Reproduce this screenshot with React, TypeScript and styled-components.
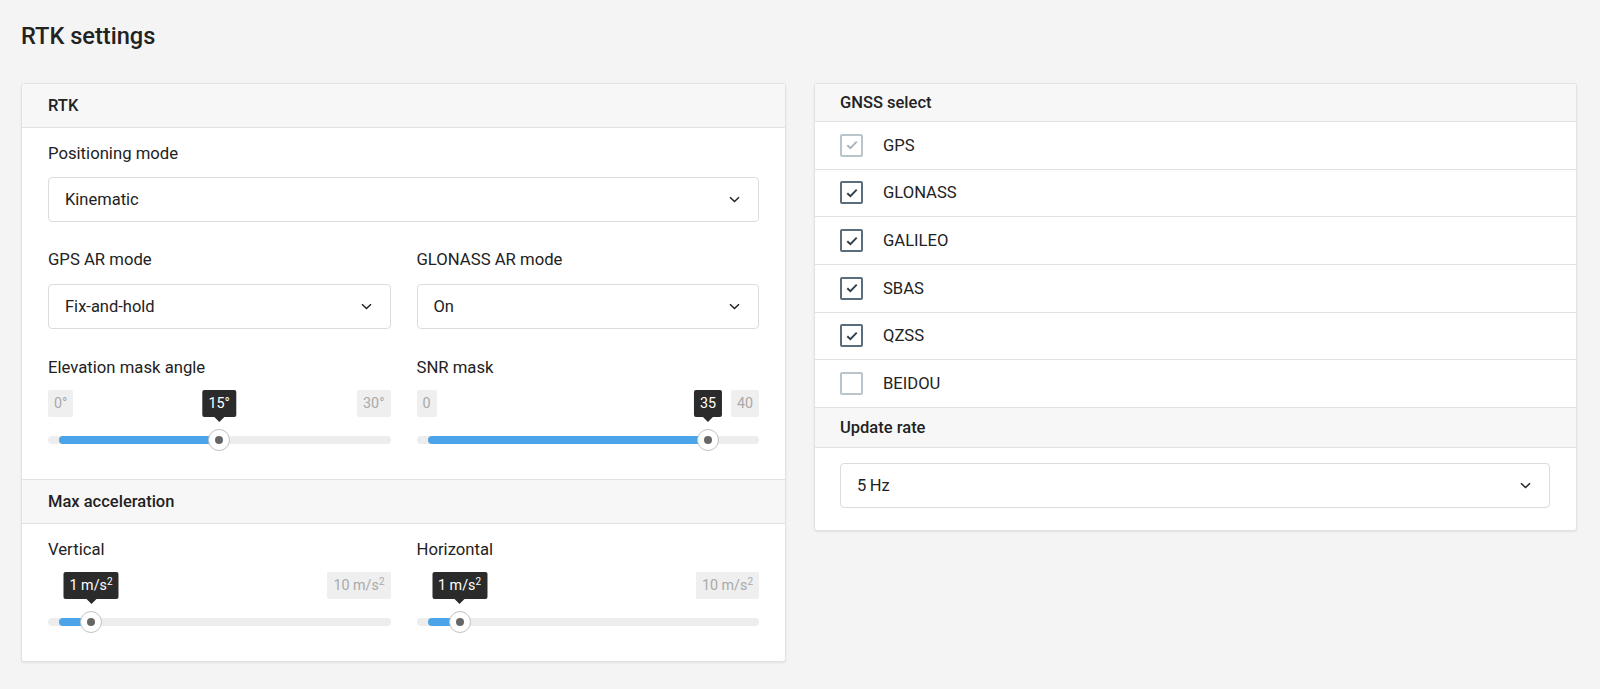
import React from "react";
import styled, { createGlobalStyle } from "styled-components";

const GlobalStyle = createGlobalStyle`
  html, body { margin: 0; padding: 0; background: #f4f4f4; }
  body {
    font-family: Roboto, "Liberation Sans", Arial, sans-serif;
    color: #222;
    -webkit-font-smoothing: antialiased;
  }
  * { box-sizing: border-box; }
`;

const Page = styled.div`
  padding: 21px 23px 26px 21px;
  min-height: 689px;
`;

const Title = styled.h1`
  margin: 0 0 32px;
  font-size: 23.6px;
  line-height: 30px;
  font-weight: 500;
  color: #222;
`;

const Columns = styled.div`
  display: grid;
  grid-template-columns: 765px 763px;
  column-gap: 28px;
  align-items: start;
`;

const Panel = styled.section`
  background: #fff;
  border: 1px solid #e2e2e2;
  border-radius: 3px;
  box-shadow: 0 1px 2px rgba(0, 0, 0, 0.08);
  overflow: hidden;
`;

const PanelHeader = styled.div<{ $h: number; $top?: boolean; $pad?: number }>`
  height: ${(p) => p.$h}px;
  display: flex;
  align-items: center;
  padding: 0 ${(p) => p.$pad ?? 26}px;
  background: #f7f7f7;
  border-bottom: 1px solid #e2e2e2;
  ${(p) => (p.$top ? "border-top: 1px solid #e2e2e2;" : "")}
  font-size: 16.5px;
  font-weight: 500;
  color: #222;
`;

const Body = styled.div<{ $pt: number; $pb: number; $px?: number }>`
  padding: ${(p) => p.$pt}px ${(p) => p.$px ?? 26}px ${(p) => p.$pb}px;
  display: flex;
  flex-direction: column;
  gap: 28px;
`;

const TwoCols = styled.div<{ $gapTop?: number }>`
  display: grid;
  grid-template-columns: 1fr 1fr;
  column-gap: 26px;
  margin-top: ${(p) => p.$gapTop ?? 0}px;
`;

const Field = styled.div`
  display: flex;
  flex-direction: column;
`;

const Label = styled.div<{ $mb: number }>`
  font-size: 16.7px;
  line-height: 20px;
  color: #222;
  margin-bottom: ${(p) => p.$mb}px;
`;

const SelectBox = styled.div`
  height: 45px;
  border: 1px solid #dcdcdc;
  border-radius: 4px;
  background: #fff;
  display: flex;
  align-items: center;
  justify-content: space-between;
  padding: 0 18px 0 16px;
  font-size: 16.5px;
  color: #222;
`;

const Chevron = () => (
  <svg width="11" height="7" viewBox="0 0 11 7" fill="none">
    <path d="M1 1.2l4.5 4.3 4.5-4.3" stroke="#222" strokeWidth="1.5" />
  </svg>
);

const Select = ({ value }: { value: string }) => (
  <SelectBox>
    <span>{value}</span>
    <Chevron />
  </SelectBox>
);

/* Slider */
const SliderWrap = styled.div`
  position: relative;
`;

const BadgeRow = styled.div`
  display: flex;
  justify-content: space-between;
  height: 27px;
`;

const Badge = styled.span<{ $hidden?: boolean }>`
  visibility: ${(p) => (p.$hidden ? "hidden" : "visible")};
  height: 27px;
  line-height: 27px;
  padding: 0 6px;
  background: #efefef;
  border-radius: 2px;
  color: #a9a9a9;
  font-size: 14.3px;
  white-space: nowrap;
`;

const Tip = styled.span`
  position: absolute;
  top: 0;
  height: 27px;
  line-height: 27px;
  padding: 0 6px;
  transform: translateX(-50%);
  background: #2b2b2b;
  color: #fff;
  border-radius: 2px;
  font-size: 14.3px;
  white-space: nowrap;
  &::after {
    content: "";
    position: absolute;
    left: 50%;
    top: 100%;
    margin-left: -5px;
    border-left: 5px solid transparent;
    border-right: 5px solid transparent;
    border-top: 5px solid #2b2b2b;
  }
`;

const Track = styled.div`
  position: relative;
  margin-top: 19px;
  height: 8px;
  border-radius: 4px;
  background: #ededed;
`;

const Fill = styled.div`
  position: absolute;
  left: 11px;
  top: 0;
  bottom: 0;
  border-radius: 4px 0 0 4px;
  background: #4ba4e7;
`;

const Thumb = styled.div`
  position: absolute;
  top: 50%;
  width: 22px;
  height: 22px;
  margin: -11px 0 0 -11px;
  border-radius: 50%;
  background: #fff;
  border: 1px solid #c2c2c2;
  display: flex;
  align-items: center;
  justify-content: center;
  &::after {
    content: "";
    width: 8px;
    height: 8px;
    border-radius: 50%;
    background: #666;
  }
`;

const Sup = styled.sup`
  font-size: 10px;
  line-height: 0;
  vertical-align: 5px;
`;

type SliderProps = {
  min: React.ReactNode;
  max: React.ReactNode;
  tip: React.ReactNode;
  frac: number;
  hideMin?: boolean;
};

const Slider = ({ min, max, tip, frac, hideMin }: SliderProps) => {
  const pos = `calc(11px + (100% - 22px) * ${frac})`;
  return (
    <SliderWrap>
      <BadgeRow>
        <Badge $hidden={hideMin}>{min}</Badge>
        <Badge>{max}</Badge>
      </BadgeRow>
      <Tip style={{ left: pos }}>{tip}</Tip>
      <Track>
        <Fill style={{ width: `calc((100% - 22px) * ${frac})` }} />
        <Thumb style={{ left: pos }} />
      </Track>
    </SliderWrap>
  );
};

/* GNSS rows */
const Row = styled.div`
  height: 47.67px;
  border-bottom: 1px solid #e2e2e2;
  display: flex;
  align-items: center;
  gap: 20px;
  padding: 0 25px;
  font-size: 16.6px;
  color: #222;
`;

type BoxState = "checked" | "disabled" | "off";

const Box = styled.span<{ $state: BoxState }>`
  width: 23px;
  height: 23px;
  flex: none;
  border: 2px solid
    ${(p) => (p.$state === "checked" ? "#5a6d7c" : "#bac4cb")};
  border-radius: 2px;
  display: flex;
  align-items: center;
  justify-content: center;
`;

const CheckBox = ({ state }: { state: BoxState }) => (
  <Box $state={state}>
    {state !== "off" && (
      <svg width="12" height="10" viewBox="0 0 12 10" fill="none">
        <path
          d="M1.3 5.2l3.1 3 6.3-6.6"
          stroke={state === "checked" ? "#2f3d48" : "#a9b4bc"}
          strokeWidth="1.9"
        />
      </svg>
    )}
  </Box>
);

const gnss: { name: string; state: BoxState }[] = [
  { name: "GPS", state: "disabled" },
  { name: "GLONASS", state: "checked" },
  { name: "GALILEO", state: "checked" },
  { name: "SBAS", state: "checked" },
  { name: "QZSS", state: "checked" },
  { name: "BEIDOU", state: "off" },
];

const UpdateBody = styled.div`
  padding: 15px 26px 22px 25px;
`;

const Accel = () => (
  <>
    1 m/s<Sup>2</Sup>
  </>
);

const AccelMax = () => (
  <>
    10 m/s<Sup>2</Sup>
  </>
);

export default function App() {
  return (
    <>
      <GlobalStyle />
      <Page>
        <Title>RTK settings</Title>
        <Columns>
          <Panel>
            <PanelHeader $h={44}>RTK</PanelHeader>
            <Body $pt={16} $pb={35}>
              <Field>
                <Label $mb={13}>Positioning mode</Label>
                <Select value="Kinematic" />
              </Field>
              <TwoCols>
                <Field>
                  <Label $mb={14}>GPS AR mode</Label>
                  <Select value="Fix-and-hold" />
                </Field>
                <Field>
                  <Label $mb={14}>GLONASS AR mode</Label>
                  <Select value="On" />
                </Field>
              </TwoCols>
              <TwoCols $gapTop={1}>
                <Field>
                  <Label $mb={12}>Elevation mask angle</Label>
                  <Slider min="0°" max="30°" tip="15°" frac={15 / 30} />
                </Field>
                <Field>
                  <Label $mb={12}>SNR mask</Label>
                  <Slider min="0" max="40" tip="35" frac={35 / 40} />
                </Field>
              </TwoCols>
            </Body>
            <PanelHeader $h={45} $top>
              Max acceleration
            </PanelHeader>
            <Body $pt={16} $pb={35}>
              <TwoCols>
                <Field>
                  <Label $mb={12}>Vertical</Label>
                  <Slider
                    min="0"
                    max={<AccelMax />}
                    tip={<Accel />}
                    frac={0.1}
                    hideMin
                  />
                </Field>
                <Field>
                  <Label $mb={12}>Horizontal</Label>
                  <Slider
                    min="0"
                    max={<AccelMax />}
                    tip={<Accel />}
                    frac={0.1}
                    hideMin
                  />
                </Field>
              </TwoCols>
            </Body>
          </Panel>

          <Panel>
            <PanelHeader $h={38} $pad={25}>
              GNSS select
            </PanelHeader>
            {gnss.map((g) => (
              <Row key={g.name}>
                <CheckBox state={g.state} />
                <span>{g.name}</span>
              </Row>
            ))}
            <PanelHeader $h={40} $pad={25}>
              Update rate
            </PanelHeader>
            <UpdateBody>
              <Select value={"5\u2009Hz"} />
            </UpdateBody>
          </Panel>
        </Columns>
      </Page>
    </>
  );
}
